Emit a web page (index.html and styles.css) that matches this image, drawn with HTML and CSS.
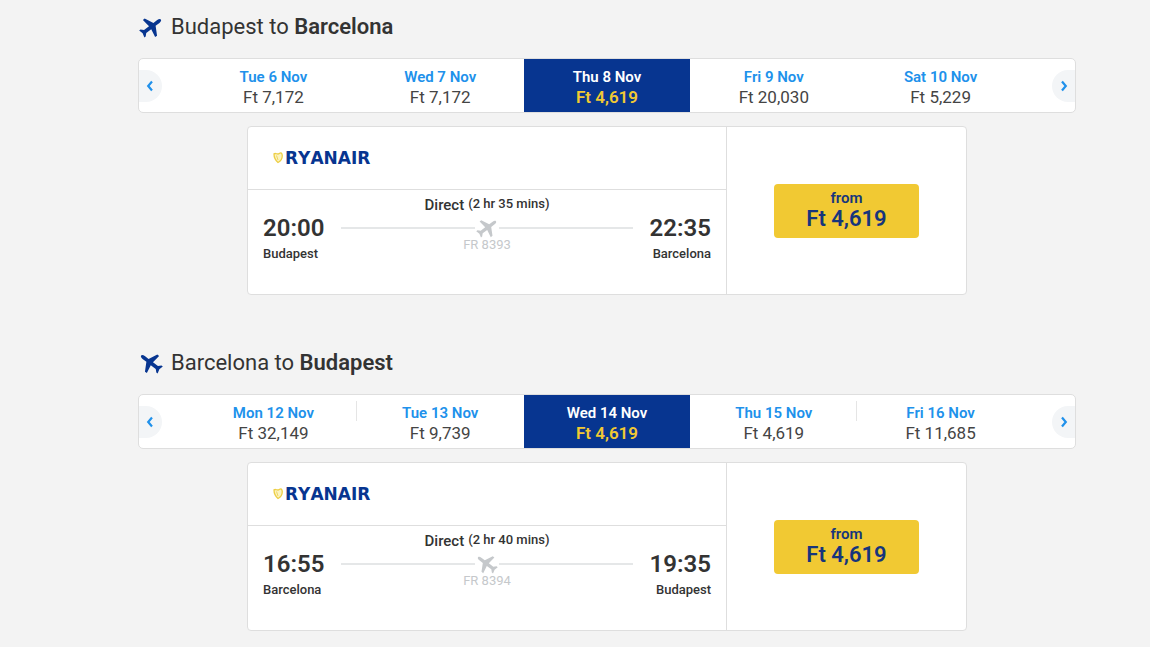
FILE: index.html
```html
<!DOCTYPE html>
<html lang="en">
<head>
<meta charset="utf-8">
<meta name="viewport" content="width=device-width, initial-scale=1">
<title>Select flights</title>
<link rel="stylesheet" href="styles.css">
</head>
<body>
<svg class="symbols" aria-hidden="true">
  <symbol id="plane" viewBox="0 0 24 24" overflow="visible">
    <path transform="rotate(-37 12 12)" d="M25.500 12c0-1.200-1.500-2-3.500-2H16.800L12 .5H9.600L10.800 10H4L1.200 7.300H-.6L.6 12-.6 16.700H1.200L4 14h6.800L9 23.500h2.600L16.800 14H22c2 0 3.500-.8 3.500-2z"/>
  </symbol>
  <symbol id="chevron" viewBox="0 0 8 12">
    <path d="M6 1.500 2.200 6 6 10.500" fill="none" stroke="currentColor" stroke-width="2.200"/>
  </symbol>
  <symbol id="harp" viewBox="0 0 10 12">
    <path d="M1 1.800C3 .6 4.300 3 6.200 1.600S9 1.200 9.200 3c.3 3-1.500 6-4.200 7.500C2.500 8.500 1 5.500 1 1.800z" fill="#fbf3c0" stroke="#edce45" stroke-width="1.300"/>
    <path d="M3.500 3.500 5 8" stroke="#edce45" stroke-width=".8"/>
  </symbol>
</svg>
<main class="page">
  <section class="journey">
    <h2 class="route"><svg class="route-icon"><use href="#plane"/></svg><span>Budapest to <strong>Barcelona</strong></span></h2>
    <div class="dates">
      <button class="nav" aria-label="Earlier dates"><svg class="chevron"><use href="#chevron"/></svg></button>
      <button class="day"><span class="day-name">Tue 6 Nov</span><span>Ft 7,172</span></button>
      <button class="day"><span class="day-name">Wed 7 Nov</span><span>Ft 7,172</span></button>
      <button class="day selected" aria-pressed="true"><span class="day-name">Thu 8 Nov</span><span>Ft 4,619</span></button>
      <button class="day"><span class="day-name">Fri 9 Nov</span><span>Ft 20,030</span></button>
      <button class="day"><span class="day-name">Sat 10 Nov</span><span>Ft 5,229</span></button>
      <button class="nav next" aria-label="Later dates"><svg class="chevron"><use href="#chevron"/></svg></button>
    </div>
    <article class="flight">
      <div class="details">
        <div class="carrier"><svg class="harp"><use href="#harp"/></svg><span>RYANAIR</span></div>
        <div class="legs">
          <div class="stop"><div class="time">20:00</div><div class="city">Budapest</div></div>
          <div class="path">
            <div class="duration"><span>Direct</span><small>(2 hr 35 mins)</small></div>
            <div class="track"><svg class="track-icon"><use href="#plane"/></svg></div>
            <div class="number">FR 8393</div>
          </div>
          <div class="stop arrival"><div class="time">22:35</div><div class="city">Barcelona</div></div>
        </div>
      </div>
      <div class="fare"><button class="buy"><span>from</span><span class="amount">Ft 4,619</span></button></div>
    </article>
  </section>
  <section class="journey inbound">
    <h2 class="route"><svg class="route-icon"><use href="#plane"/></svg><span>Barcelona to <strong>Budapest</strong></span></h2>
    <div class="dates">
      <button class="nav" aria-label="Earlier dates"><svg class="chevron"><use href="#chevron"/></svg></button>
      <button class="day divided"><span class="day-name">Mon 12 Nov</span><span>Ft 32,149</span></button>
      <button class="day"><span class="day-name">Tue 13 Nov</span><span>Ft 9,739</span></button>
      <button class="day selected" aria-pressed="true"><span class="day-name">Wed 14 Nov</span><span>Ft 4,619</span></button>
      <button class="day divided"><span class="day-name">Thu 15 Nov</span><span>Ft 4,619</span></button>
      <button class="day"><span class="day-name">Fri 16 Nov</span><span>Ft 11,685</span></button>
      <button class="nav next" aria-label="Later dates"><svg class="chevron"><use href="#chevron"/></svg></button>
    </div>
    <article class="flight">
      <div class="details">
        <div class="carrier"><svg class="harp"><use href="#harp"/></svg><span>RYANAIR</span></div>
        <div class="legs">
          <div class="stop"><div class="time">16:55</div><div class="city">Barcelona</div></div>
          <div class="path">
            <div class="duration"><span>Direct</span><small>(2 hr 40 mins)</small></div>
            <div class="track"><svg class="track-icon"><use href="#plane"/></svg></div>
            <div class="number">FR 8394</div>
          </div>
          <div class="stop arrival"><div class="time">19:35</div><div class="city">Budapest</div></div>
        </div>
      </div>
      <div class="fare"><button class="buy"><span>from</span><span class="amount">Ft 4,619</span></button></div>
    </article>
  </section>
</main>
</body>
</html>
```
FILE: styles.css
```css
* { box-sizing: border-box; }
body {
  margin: 0;
  background: #f3f3f3;
  color: #333;
  font-family: Roboto, "Liberation Sans", sans-serif;
}
button {
  border: 0;
  padding: 0;
  background: none;
  color: inherit;
  font: inherit;
  cursor: pointer;
}
svg { display: block; fill: currentColor; overflow: visible; }
.symbols { position: absolute; width: 0; height: 0; }
.page {
  display: flex;
  flex-direction: column;
  gap: 53px;
  padding: 12px 74px 16px 138px;
}
.route {
  display: flex;
  align-items: center;
  gap: 9px;
  margin: 0 0 16px;
  padding-left: 2px;
  font-size: 22px;
  line-height: 30px;
  font-weight: 400;
}
.route strong { font-weight: 600; }
.route-icon { width: 22px; height: 22px; color: #073590; }
.inbound .route-icon, .inbound .track-icon { transform: scaleX(-1); }
.dates {
  display: flex;
  align-items: stretch;
  height: 55px;
  border: 1px solid #dedede;
  border-radius: 5px;
  background: #fff;
  overflow: hidden;
}
.nav {
  display: flex;
  align-items: center;
  flex: none;
  align-self: center;
  width: 23px;
  height: 32px;
  margin-right: 28px;
  padding-left: 7px;
  border-radius: 0 16px 16px 0;
  background: #f3f5f7;
  color: #2091eb;
}
.nav.next { margin: 0 0 0 28px; transform: scaleX(-1); }
.chevron { width: 8px; height: 12px; }
.day {
  display: flex;
  flex: 1;
  flex-direction: column;
  align-items: center;
  justify-content: center;
  padding-top: 2px;
  font-size: 17px;
  line-height: 20px;
  color: #444;
}
.day-name { font-size: 15px; font-weight: 600; color: #2091eb; }
.day.selected { background: #073590; color: #f1c933; font-weight: 600; }
.selected .day-name { color: #fff; }
.divided {
  background: linear-gradient(#e5e5e5, #e5e5e5) right 6px / 1px 20px no-repeat;
}
.flight {
  display: flex;
  max-width: 720px;
  margin: 13px auto 0;
  border: 1px solid #dedede;
  border-radius: 4px;
  background: #fff;
}
.details { flex: 2; border-right: 1px solid #dedede; }
.carrier {
  display: flex;
  align-items: center;
  gap: 2px;
  height: 63px;
  padding-left: 25px;
  border-bottom: 1px solid #dedede;
  color: #073590;
  font-family: "DejaVu Sans", sans-serif;
  font-size: 17px;
  font-weight: 700;
  font-kerning: none;
}
.harp { width: 10px; height: 12px; }
.legs {
  display: flex;
  gap: 17px;
  padding: 6px 15px 32px;
}
.stop { padding-top: 18px; }
.arrival { text-align: right; }
.time { font-size: 24px; line-height: 28px; font-weight: 600; }
.city { margin-top: 4px; font-size: 13px; line-height: 16px; font-weight: 500; }
.path { flex: 1; }
.duration {
  display: flex;
  justify-content: center;
  gap: 4px;
  line-height: 19px;
  font-size: 15px;
  font-weight: 500;
}
.duration small { font-size: 13px; line-height: 16px; font-weight: 500; }
.track {
  display: flex;
  align-items: center;
  gap: 2px;
  margin-top: 3px;
  color: #c5c8cb;
}
.track::before, .track::after {
  content: "";
  flex: 1;
  height: 2px;
  background: #e5e7e8;
}
.track-icon { width: 20px; height: 20px; }
.number { text-align: center; font-size: 13px; line-height: 14px; color: #c5c8cb; }
.fare {
  display: flex;
  flex: 1;
  align-items: center;
  justify-content: center;
}
.buy {
  display: flex;
  flex-direction: column;
  align-items: center;
  width: 145px;
  padding: 4px 0 8px;
  border-radius: 4px;
  background: #f1c933;
  color: #16357c;
  font-size: 15px;
  line-height: 20px;
  font-weight: 600;
}
.amount { font-size: 22px; line-height: 22px; }
```
